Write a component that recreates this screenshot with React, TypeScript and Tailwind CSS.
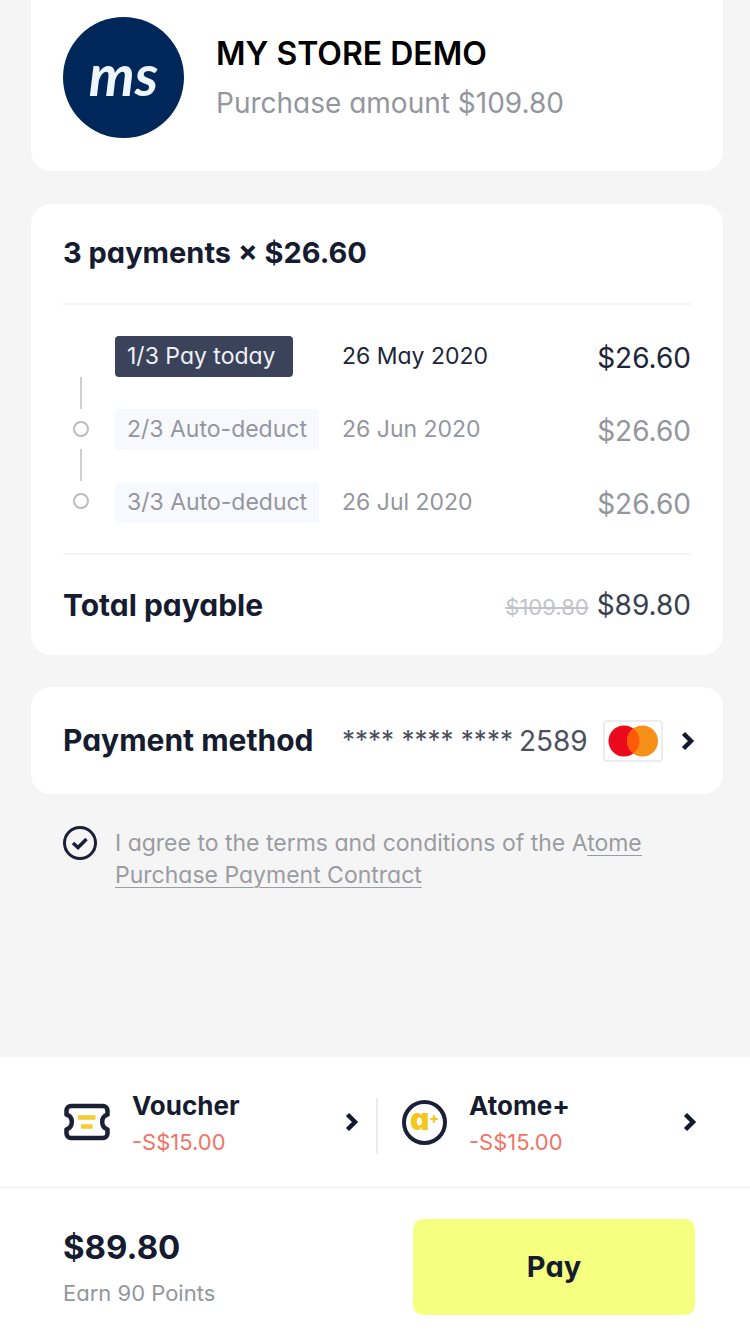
import type { ReactNode } from "react";

const installments = [
  { label: "1/3 Pay today", date: "26 May 2020", amount: "$26.60", active: true },
  { label: "2/3 Auto-deduct", date: "26 Jun 2020", amount: "$26.60", active: false },
  { label: "3/3 Auto-deduct", date: "26 Jul 2020", amount: "$26.60", active: false },
];

function Chevron() {
  return (
    <svg className="h-5 w-3.5 shrink-0" viewBox="0 0 14 20" fill="none" aria-hidden="true">
      <path d="M2.500 2.500L10 10l-7.500 7.500" stroke="#141a2e" strokeWidth="4.500" />
    </svg>
  );
}

function StoreLogo() {
  return (
    <div className="flex size-[121px] shrink-0 items-center justify-center rounded-full bg-[#00275a]">
      <span className="pb-2 font-['Lato',sans-serif] text-[58px] leading-none font-bold text-[#eef6fc] italic">ms</span>
    </div>
  );
}

function VoucherIcon() {
  return (
    <svg className="h-[38px] w-[46px] shrink-0" viewBox="0 0 46 38" fill="none" aria-hidden="true">
      <path
        d="M7 3h32a4.500 4.500 0 0 1 4.500 4.500v4.200c-3.400 1-5.300 3.900-5.300 7.300s1.900 6.300 5.300 7.300v4.200A4.500 4.500 0 0 1 39 35H7a4.500 4.500 0 0 1-4.500-4.500v-4.200c3.400-1 5.300-3.900 5.300-7.300s-1.900-6.300-5.300-7.300V7.500A4.500 4.500 0 0 1 7 3z"
        stroke="#1b2036"
        strokeWidth="4.500"
        strokeLinejoin="round"
      />
      <path d="M14 14.500h17.500M17 23.500h11.500" stroke="#f2cc30" strokeWidth="4.500" />
    </svg>
  );
}

function AtomePlusIcon() {
  return (
    <span
      className="flex size-[45px] shrink-0 items-center justify-center rounded-full border-4 border-[#1b2036] font-black text-[#f2c81e]"
      aria-hidden="true"
    >
      <span className="pb-1.5 text-[30px] leading-none">a</span>
      <span className="pb-2 text-sm leading-none">+</span>
    </span>
  );
}

function MastercardBadge() {
  return (
    <span className="flex h-[42px] w-[60px] shrink-0 items-center justify-center rounded border-2 border-[#ebecef] bg-white">
      <svg className="h-8 w-[52px]" viewBox="0 0 52 32" role="img" aria-label="Mastercard">
        <circle cx="17" cy="16" r="15.500" fill="#ea0a1b" />
        <circle cx="35.500" cy="16" r="15.500" fill="#f79019" />
        <path d="M26.250 3.560a15.500 15.500 0 0 1 0 24.880a15.500 15.500 0 0 1 0-24.880z" fill="#ff5a0a" />
      </svg>
    </span>
  );
}

function Benefit({ icon, title, value }: { icon: ReactNode; title: string; value: string }) {
  return (
    <button type="button" className="flex flex-1 items-center text-left">
      {icon}
      <span className="ml-[22px] flex-1 pt-1">
        <span className="block text-[26px] leading-[37px] font-bold">{title}</span>
        <span className="block text-[22px] leading-[37px] text-[#ee7468]">{value}</span>
      </span>
      <Chevron />
    </button>
  );
}

export default function App() {
  return (
    <div className="flex min-h-screen flex-col bg-[#f5f5f5] font-['Inter','Liberation_Sans',sans-serif] text-[#161c2f] [font-feature-settings:'cv11']">
      <main className="flex flex-1 flex-col pr-[27px] pl-[31px]">
        <section className="flex items-center gap-8 rounded-b-[20px] bg-white px-8 pt-[17px] pb-[33px]">
          <StoreLogo />
          <div>
            <h1 className="pt-0.5 text-[32px] leading-[48px] font-semibold text-black">MY STORE DEMO</h1>
            <p className="text-[28px] leading-[50px] text-[#94969e]">Purchase amount $109.80</p>
          </div>
        </section>

        <section className="mt-[33px] rounded-[20px] bg-white px-8">
          <h2 className="border-b-2 border-[#f4f4f5] pt-6 pb-[25px] text-[29px] leading-[50px] font-bold">
            3 payments × $26.60
          </h2>
          <div className="flex border-b-2 border-[#f4f4f5] pt-[15px] pb-3.5">
            <div className="mr-[17px] flex w-[35px] shrink-0 flex-col items-center gap-3 pt-[57px]" aria-hidden="true">
              <span className="h-8 w-0.5 bg-[#cfcfd2]" />
              <span className="size-4 rounded-full border-2 border-[#bcbcc0]" />
              <span className="h-8 w-0.5 bg-[#cfcfd2]" />
              <span className="size-4 rounded-full border-2 border-[#bcbcc0]" />
            </div>
            <ol className="flex-1">
              {installments.map((item) => (
                <li
                  className={`flex h-[73px] items-center ${item.active ? "text-[#20263a]" : "text-[#94969e]"}`}
                  key={item.label}
                >
                  <span className="w-[227px] text-[23px] leading-[41px]">
                    <span
                      className={`inline-block min-w-[178px] rounded px-3 ${item.active ? "bg-[#3b435a] text-[#eef0f6]" : "bg-[#f8f9fe]"}`}
                    >
                      {item.label}
                    </span>
                  </span>
                  <time className="flex-1 text-[23px]">{item.date}</time>
                  <span className="pt-0.5 text-[28px]">{item.amount}</span>
                </li>
              ))}
            </ol>
          </div>
          <div className="flex h-[100px] items-center justify-between">
            <h2 className="text-[30px] font-bold">Total payable</h2>
            <p className="flex items-baseline gap-2">
              <s className="text-[22px] text-[#c2c3c8]">$109.80</s>
              <span className="text-[28px] text-[#3a3f50]">$89.80</span>
            </p>
          </div>
        </section>

        <button type="button" className="mt-8 flex h-[107px] items-center rounded-[20px] bg-white pr-7 pl-8 text-left">
          <span className="w-[279px] text-[30px] font-bold">Payment method</span>
          <span className="flex flex-1 items-start gap-1.5 leading-none whitespace-nowrap text-[#4b5060]">
            <span className="text-[26px]">**** **** ****</span>
            <span className="text-[28px]">2589</span>
          </span>
          <MastercardBadge />
          <span className="ml-[18px] flex">
            <Chevron />
          </span>
        </button>

        <div className="flex items-start gap-[18px] px-8 pt-8 pb-8">
          <span className="grid shrink-0">
            <input
              id="agree"
              type="checkbox"
              defaultChecked
              className="peer col-start-1 row-start-1 size-[34px] appearance-none rounded-full border-[3px] border-[#1b2036]"
            />
            <svg
              className="pointer-events-none invisible col-start-1 row-start-1 size-[34px] peer-checked:visible"
              viewBox="0 0 34 34"
              fill="none"
              aria-hidden="true"
            >
              <path d="M10 17l5 4.500 8.500-8.500" stroke="#1b2036" strokeWidth="3.500" />
            </svg>
          </span>
          <p className="pt-px text-[23px] leading-8 text-[#9a9ca2]">
            <label htmlFor="agree">I agree to the terms and conditions of the </label>
            <a href="#contract">
              A<span className="underline decoration-1 underline-offset-4">tome</span>{" "}
              <span className="underline decoration-1 underline-offset-4">Purchase Payment Contract</span>
            </a>
          </p>
        </div>
      </main>

      <footer className="bg-white">
        <div className="flex items-center border-b border-[#ececee] py-[26px] pr-[53px] pl-16">
          <Benefit icon={<VoucherIcon />} title="Voucher" value="-S$15.00" />
          <span className="mt-2 mr-6 ml-[17px] h-14 w-0.5 bg-[#ebebed]" />
          <Benefit icon={<AtomePlusIcon />} title="Atome+" value="-S$15.00" />
        </div>
        <div className="flex items-start justify-between pt-[31px] pr-[55px] pb-6 pl-[63px]">
          <div className="pt-1">
            <p className="text-[33px] leading-[48px] font-bold">$89.80</p>
            <p className="text-[22px] leading-[44px] text-[#94969e]">Earn 90 Points</p>
          </div>
          <button type="button" className="h-24 w-[282px] rounded-[10px] bg-[#f5ff80] text-[29px] font-bold">
            Pay
          </button>
        </div>
      </footer>
    </div>
  );
}
